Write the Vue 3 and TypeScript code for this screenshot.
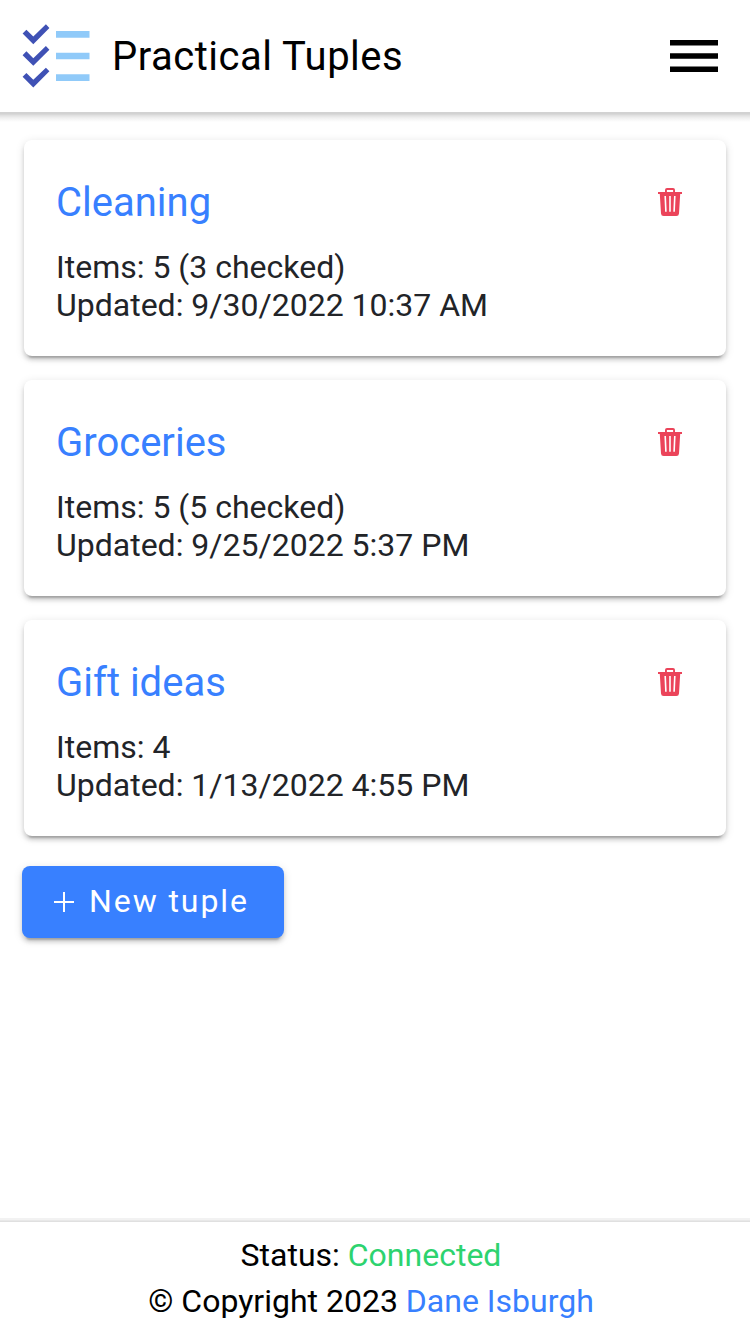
<script setup lang="ts">
interface TupleList {
  title: string
  items: string
  updated: string
}

const lists: TupleList[] = [
  { title: 'Cleaning', items: '5 (3 checked)', updated: '9/30/2022 10:37 AM' },
  { title: 'Groceries', items: '5 (5 checked)', updated: '9/25/2022 5:37 PM' },
  { title: 'Gift ideas', items: '4', updated: '1/13/2022 4:55 PM' },
]
const rows: number[] = [0, 21.67, 43.33]
</script>

<template>
  <div class="page">
    <header class="header">
      <svg class="logo" viewBox="0 0 80 80" aria-hidden="true">
        <g v-for="dy in rows" :key="dy" :transform="`translate(0 ${dy})`">
          <path fill="#3f51b5" d="M29.9 8.3 17.3 20.5 10.4 13.7 6.6 17.5 17.3 28.2 33.4 12Z" />
          <path fill="#90caf9" d="M40 15h33.5v6.67H40Z" />
        </g>
      </svg>
      <h1 class="title">Practical Tuples</h1>
      <button class="menu" type="button" aria-label="Menu">
        <svg viewBox="0 0 48 32" aria-hidden="true">
          <path d="M0 0h48v5.6H0ZM0 13.2h48v5.6H0ZM0 26.4h48V32H0Z" />
        </svg>
      </button>
    </header>

    <main class="content">
      <article v-for="list in lists" :key="list.title" class="card">
        <div class="card-head">
          <h2 class="card-title">{{ list.title }}</h2>
          <button class="trash" type="button" aria-label="Delete">
            <svg viewBox="0 0 24 28" aria-hidden="true">
              <path
                fill-rule="evenodd"
                d="M7 4V2Q7 0 9 0H15Q17 0 17 2V4H24V6H22.2L21 25.5Q20.8 28 18.4 28H5.6Q3.2 28 3 25.5L1.8 6H0V4ZM8.9 4H15.1V2H8.9ZM6.4 8 7.1 23.7H8.7L8 8ZM11.2 8V23.7H12.8V8ZM16 8 15.3 23.7H16.9L17.6 8Z"
              />
            </svg>
          </button>
        </div>
        <p class="details">
          Items: {{ list.items }}<br />
          Updated: {{ list.updated }}
        </p>
      </article>

      <button class="new" type="button">
        <svg viewBox="0 0 20 20" aria-hidden="true">
          <path d="M10 0V20M0 10H20" />
        </svg>
        <span>New tuple</span>
      </button>
    </main>

    <footer class="footer">
      <div>Status: <span class="connected">Connected</span></div>
      <div>© Copyright 2023 <a class="link">Dane Isburgh</a></div>
    </footer>
  </div>
</template>

<style>
body {
  margin: 0;
  background: #fff;
}
</style>

<style scoped>
.page {
  display: flex;
  flex-direction: column;
  height: 1334px;
  box-sizing: border-box;
  overflow: hidden;
  background: #fff;
  color: #000;
  font-family: Roboto, "Liberation Sans", sans-serif;
  font-size: 32px;
}
button {
  border: 0;
  padding: 0;
  background: none;
  font: inherit;
}
svg {
  display: block;
}
.header {
  display: flex;
  align-items: center;
  flex: none;
  height: 112px;
  padding: 0 32px 0 16px;
  background: #fff;
}
.header::after {
  content: "";
  position: absolute;
  top: 112px;
  left: 0;
  width: 100%;
  height: 10px;
  background: linear-gradient(#d2d2d2 0, #d2d2d2 2px, #dedede 3px, #f0f0f0 6px, #fff 10px);
}
.logo {
  width: 80px;
  height: 80px;
}
.title {
  flex: 1;
  margin: 2px 0 0 16px;
  font-size: 40px;
  font-weight: 400;
  line-height: 48px;
  letter-spacing: 0.5px;
}
.menu svg {
  width: 48px;
  height: 32px;
}
.content {
  display: flex;
  flex: 1;
  flex-direction: column;
  gap: 24px;
  padding: 28px 24px 0;
}
.card {
  box-sizing: border-box;
  height: 216px;
  padding: 38px 32px 0;
  border-radius: 8px;
  background: #fff;
  box-shadow: 0 6px 2px -4px rgba(0, 0, 0, 0.2), 0 4px 4px 0 rgba(0, 0, 0, 0.14),
    0 2px 10px 0 rgba(0, 0, 0, 0.12);
}
.card-head {
  display: flex;
  align-items: center;
  justify-content: space-between;
  height: 48px;
  padding-right: 12px;
}
.card-title {
  margin: 2px 0 0;
  color: #3880ff;
  font-size: 40px;
  font-weight: 400;
  line-height: 48px;
}
.trash svg {
  width: 24px;
  height: 28px;
  fill: #eb445a;
}
.details {
  margin: 22px 0 0;
  color: #222428;
  line-height: 38px;
}
.new {
  display: flex;
  align-items: center;
  align-self: flex-start;
  box-sizing: border-box;
  width: 262px;
  height: 72px;
  margin: 6px 0 0 -2px;
  padding: 0 0 2px 32px;
  border-radius: 8px;
  background: #3880ff;
  color: #fff;
  letter-spacing: 1.92px;
  font-weight: 400;
  white-space: nowrap;
  box-shadow: 0 6px 2px -4px rgba(0, 0, 0, 0.2), 0 4px 4px 0 rgba(0, 0, 0, 0.14),
    0 2px 10px 0 rgba(0, 0, 0, 0.12);
}
.new svg {
  width: 20px;
  height: 20px;
  margin: 2px 15px 0 0;
  stroke: #fff;
  stroke-width: 2;
}
.footer {
  flex: none;
  height: 112px;
  padding: 10px 8px 0 0;
  box-sizing: border-box;
  text-align: center;
  line-height: 46px;
  background: #fff;
  box-shadow: 0 -1px 0 #e0e0e0, 0 -2px 0 #e8e8e8, 0 -4px 0 #f2f2f2;
}
.connected {
  color: #2dd36f;
}
.link {
  color: #3880ff;
}
</style>
